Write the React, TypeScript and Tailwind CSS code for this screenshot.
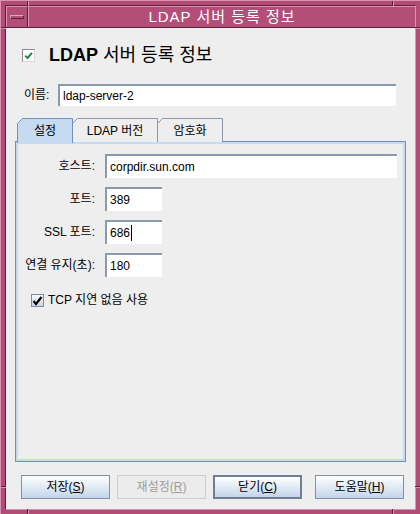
import React from 'react'

interface TabProps {
  label: string
  width: number
  active?: boolean
  className: string
}

const Tab: React.FC<TabProps> = ({ label, width, active, className }) => {
  const h = active ? 25 : 24
  return (
    <div className={`relative h-[24px] ${className} ${active ? 'z-20' : 'z-10'}`}>
      <svg className="absolute left-0 top-0" width={width} height={h}>
        <path
          d={`M0.5 ${h} V5.5 L5.5 0.5 H${width - 0.5} V${h}`}
          fill={active ? '#c6daf0' : '#eeeeee'}
          stroke={active ? '#6d8ec6' : '#8e97a5'}
          strokeWidth="1"
        />
      </svg>
      <span className="relative flex h-full items-center justify-center pt-[1px] text-[12px] text-black">{label}</span>
    </div>
  )
}

const Field: React.FC<{ label: string; value: string; wide?: boolean; caret?: boolean }> = ({ label, value, wide, caret }) => (
  <div className="flex h-[24px] items-center">
    <span className="w-[76px] text-right text-[12px] text-black">{label}</span>
    <div
      className={`ml-[10px] flex h-[24px] items-center border-l-2 border-t-2 border-[#8a99b0] bg-white pl-[3px] text-[12px] text-black ${wide ? 'w-[292px]' : 'w-[57px]'}`}
    >
      {value}
      {caret && <span className="ml-[1px] h-[16px] w-[1px] bg-black" />}
    </div>
  </div>
)

const Btn: React.FC<{ label: string; mn: string; disabled?: boolean; focused?: boolean; className?: string }> = ({
  label,
  mn,
  disabled,
  focused,
  className = '',
}) => (
  <div
    className={`flex h-[24px] w-[89px] items-center justify-center text-[12px] ${className} ${
      disabled
        ? 'border border-[#c9ced6] bg-[#ececec] text-[#9c9c9c]'
        : focused
        ? 'border-2 border-[#6e7e96] bg-linear-to-b from-white to-[#c3d5ea] text-black'
        : 'border border-[#8191a9] bg-linear-to-b from-white to-[#c3d5ea] text-black'
    }`}
  >
    {label}(<u>{mn}</u>)
  </div>
)

export default function App() {
  return (
    <div className="relative h-[514px] w-[420px] border-l border-t border-[#dc93b3] border-r-[#4f1830] border-b-[#4f1830] bg-[#b24c77] p-[4px] font-['Liberation_Sans','Noto_Sans_CJK_KR',sans-serif]">
      {/* resize notches */}
      <div className="absolute left-[26px] top-0 h-[5px] w-[2px] border-l border-[#5e1f3c] bg-[#d890b0]" />
      <div className="absolute left-[391px] top-0 h-[5px] w-[2px] border-l border-[#5e1f3c] bg-[#d890b0]" />
      <div className="absolute bottom-0 left-[26px] h-[5px] w-[2px] border-l border-[#5e1f3c] bg-[#d890b0]" />
      <div className="absolute bottom-0 left-[391px] h-[5px] w-[2px] border-l border-[#5e1f3c] bg-[#d890b0]" />
      <div className="absolute left-0 top-[26px] h-[2px] w-[5px] border-t border-[#5e1f3c] bg-[#d890b0]" />
      <div className="absolute right-0 top-[26px] h-[2px] w-[5px] border-t border-[#5e1f3c] bg-[#d890b0]" />
      <div className="absolute bottom-[26px] left-0 h-[2px] w-[5px] border-t border-[#5e1f3c] bg-[#d890b0]" />
      <div className="absolute bottom-[26px] right-0 h-[2px] w-[5px] border-t border-[#5e1f3c] bg-[#d890b0]" />

      <div className="flex h-full flex-col border border-[#5e1f3c] border-b-[#dc93b3] border-r-[#dc93b3]">
        {/* title bar */}
        <div className="flex h-[22px] border-b border-[#5e1f3c] bg-[#b34e79]">
          <div className="flex w-[22px] items-center justify-center border-r border-[#5e1f3c] border-t border-t-[#dc93b3] border-l border-l-[#dc93b3]">
            <div className="h-[4px] w-[14px] border border-[#e3a3be] border-b-[#5e1f3c] border-r-[#5e1f3c] bg-[#b34e79]" />
          </div>
          <div className="flex flex-1 items-center justify-center border-l border-t border-[#dc93b3] pt-[1px] text-[15px] tracking-[1px] text-white">
            LDAP 서버 등록 정보
          </div>
        </div>

        {/* content */}
        <div className="flex flex-1 flex-col bg-[#eeeeee]">
          <div className="mt-[16px] flex h-[22px] items-center pl-[16px]">
            <div className="flex h-[13px] w-[13px] items-center justify-center border border-[#8c8c8c] border-b-[#d8d8d8] border-r-[#d8d8d8] bg-white">
              <svg width="9" height="9" viewBox="0 0 9 9">
                <path d="M1.2 4.6 L3.6 7 L8 1.8" fill="none" stroke="#1f8a4c" strokeWidth="2" />
              </svg>
            </div>
            <span className="ml-[14px] text-[18px] text-black">
              <b>LDAP</b> 서버 등록 정보
            </span>
          </div>

          <div className="mt-[18px] flex h-[22px] items-center pl-[18px]">
            <span className="w-[34px] text-[12px] text-black">이름:</span>
            <div className="flex h-[22px] w-[338px] items-center border-l-2 border-t-2 border-[#8a99b0] bg-white pl-[3px] text-[12px] text-black">
              ldap-server-2
            </div>
          </div>

          <div className="mt-[12px] flex pl-[11px]">
            <Tab label="설정" width={56} active className="w-[56px]" />
            <Tab label="LDAP 버전" width={86} className="-ml-[1px] w-[86px]" />
            <Tab label="암호화" width={66} className="-ml-[1px] w-[66px]" />
          </div>

          <div className="mx-[9px] -mt-[1px] h-[321px] border border-[#6d8ec6]">
            <div className="flex h-full flex-col border-2 border-[#c6daf0] pl-[1px] pt-[10px]">
              <div className="flex flex-col gap-[9px]">
                <Field label="호스트:" value="corpdir.sun.com" wide />
                <Field label="포트:" value="389" />
                <Field label="SSL 포트:" value="686" caret />
                <Field label="연결 유지(초):" value="180" />
              </div>
              <div className="mt-[16px] flex h-[14px] items-center pl-[12px]">
                <div className="flex h-[13px] w-[13px] items-end justify-start border border-[#7d8ca3] bg-linear-to-b from-[#f6f8fb] to-[#c9d7e8]">
                  <svg width="11" height="11" viewBox="0 0 11 11">
                    <path d="M1.5 6 L4 9 L9.5 2" fill="none" stroke="#000" strokeWidth="2.2" />
                  </svg>
                </div>
                <span className="ml-[4px] text-[12px] text-black">TCP 지연 없음 사용</span>
              </div>
            </div>
          </div>

          <div className="mt-[13px] flex pl-[15px]">
            <Btn label="저장" mn="S" />
            <Btn label="재설정" mn="R" disabled className="ml-[7px]" />
            <Btn label="닫기" mn="C" focused className="ml-[7px]" />
            <Btn label="도움말" mn="H" className="ml-[13px]" />
          </div>
        </div>
      </div>
    </div>
  )
}
